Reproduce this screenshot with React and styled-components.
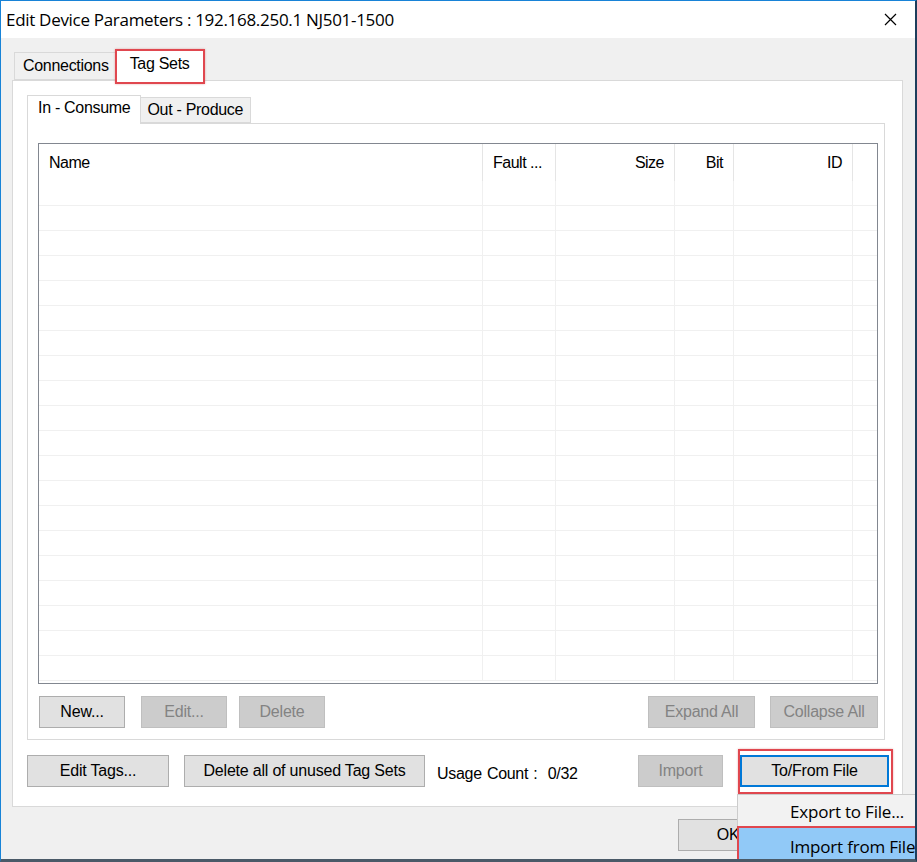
import React from "react";
import styled, { createGlobalStyle } from "styled-components";

const GlobalStyle = createGlobalStyle`
  html, body {
    margin: 0;
    padding: 0;
    overflow: hidden;
  }
  body {
    font-family: "Liberation Sans", Arial, sans-serif;
    color: #000;
  }
  * { box-sizing: border-box; }
`;

const COLS = "444px 73px 119px 59px 119px 1fr";

const Window = styled.div`
  position: relative;
  width: 917px;
  height: 862px;
  display: flex;
  flex-direction: column;
  border-top: 1px solid #1883d7;
  border-left: 1px solid #1883d7;
  border-right: 2px solid #1d3e5c;
  border-bottom: 3px solid #4a5a68;
  background: #f0f0f0;
  overflow: hidden;
`;

const TitleBar = styled.div`
  height: 37px;
  flex: none;
  background: #fff;
  display: flex;
  align-items: center;
  justify-content: space-between;
  padding: 0 18px 0 5px;
`;

const Title = styled.span`
  font-family: "Open Sans", "Liberation Sans", sans-serif;
  font-size: 17px;
  letter-spacing: -0.3px;
  color: #000;
`;

const Body = styled.div`
  flex: 1;
  display: flex;
  flex-direction: column;
  padding: 10px 12px 0 11px;
`;

const TabStrip = styled.div`
  display: flex;
  align-items: flex-end;
  height: ${(p) => p.$h}px;
  padding-left: ${(p) => p.$pad}px;
  position: relative;
  z-index: 1;
`;

const Tab = styled.div`
  position: relative;
  height: ${(p) => (p.$active ? p.$h + 3 : p.$h)}px;
  margin-bottom: ${(p) => (p.$active ? -1 : 0)}px;
  padding: 0 ${(p) => p.$px}px;
  display: flex;
  align-items: center;
  font-size: 16px;
  letter-spacing: -0.3px;
  background: ${(p) => (p.$active ? "#fff" : "#f0f0f0")};
  border: 1px solid #d9d9d9;
  border-bottom: ${(p) => (p.$active ? "none" : "1px solid #d9d9d9")};
  padding-bottom: ${(p) => (p.$active ? 4 : 0)}px;
  margin-left: ${(p) => (p.$active ? -2 : 0)}px;
  margin-right: ${(p) => (p.$active ? -2 : 0)}px;
  ${(p) => (p.$active ? "z-index: 2;" : "")}
  ${(p) =>
    p.$marked
      ? `&::after {
    content: "";
    position: absolute;
    inset: -2px -2px -3px -2px;
    border: 2px solid #e0474f;
    box-shadow: 0 0 2px rgba(200, 60, 60, 0.4);
  }`
      : ""}
`;

const Panel = styled.div`
  background: #fff;
  border: 1px solid #d9d9d9;
  display: flex;
  flex-direction: column;
  padding: ${(p) => p.$pad};
`;

const ListView = styled.div`
  height: 541px;
  border: 1px solid #828790;
  background: #fff;
  overflow: hidden;
`;

const HeaderRow = styled.div`
  display: grid;
  grid-template-columns: ${COLS};
  height: 37px;
`;

const HeaderCell = styled.div`
  display: flex;
  align-items: center;
  justify-content: ${(p) => (p.$right ? "flex-end" : "flex-start")};
  padding: 0 ${(p) => (p.$right ? 10 : 10)}px 0 ${(p) => (p.$right ? 0 : 10)}px;
  font-size: 16px;
  letter-spacing: -0.5px;
  border-right: 1px solid #e5e5e5;
  &:last-child { border-right: none; }
`;

const Row = styled.div`
  display: grid;
  grid-template-columns: ${COLS};
  height: 25px;
  border-bottom: 1px solid #f0f0f0;
`;

const Cell = styled.div`
  border-right: 1px solid #f0f0f0;
  &:last-child { border-right: none; }
`;

const ButtonRow = styled.div`
  display: flex;
  align-items: center;
  margin-top: ${(p) => p.$mt}px;
  margin-right: ${(p) => p.$mr || 0}px;
`;

const Button = styled.button`
  position: relative;
  height: 32px;
  width: ${(p) => p.$w}px;
  margin-left: ${(p) => p.$ml || 0}px;
  flex: none;
  font-family: "Liberation Sans", Arial, sans-serif;
  font-size: 16px;
  letter-spacing: -0.2px;
  padding: 0;
  color: ${(p) => (p.disabled ? "#838383" : "#000")};
  background: ${(p) => (p.disabled ? "#cccccc" : "#e1e1e1")};
  border: ${(p) =>
    p.$focus ? "2px solid #0078d7" : p.disabled ? "1px solid #bfbfbf" : "1px solid #adadad"};
  ${(p) =>
    p.$marked
      ? `&::after {
    content: "";
    position: absolute;
    inset: -8px -6px -9px -4px;
    border: 2px solid #e0474f;
    box-shadow: 0 0 2px rgba(200, 60, 60, 0.4);
  }`
      : ""}
`;

const Spacer = styled.div`
  flex: 1;
`;

const UsageText = styled.span`
  font-size: 16px;
  letter-spacing: -0.3px;
  margin-left: 12px;
  margin-top: 6px;
  word-spacing: 1px;
`;

const Footer = styled.div`
  display: flex;
  justify-content: flex-end;
  padding: 12px 27px 0 0;
  gap: 10px;
`;

const Menu = styled.div`
  position: absolute;
  left: 736px;
  top: 793px;
  width: 200px;
  height: 80px;
  background: #f2f2f2;
  border: 1px solid #cccccc;
  padding-top: 1px;
  font-family: "Open Sans", "Liberation Sans", sans-serif;
  font-size: 17px;
  letter-spacing: -0.2px;
  z-index: 5;
`;

const MenuItem = styled.div`
  position: relative;
  height: ${(p) => p.$h}px;
  display: flex;
  align-items: center;
  padding-left: 52px;
  white-space: nowrap;
  background: ${(p) => (p.$hot ? "#91c9f7" : "transparent")};
  ${(p) =>
    p.$marked
      ? `&::after {
    content: "";
    position: absolute;
    inset: -1px 0 -10px -1px;
    border: 2px solid #e0474f;
  }`
      : ""}
`;

const CloseIcon = () => (
  <svg width="13" height="13" viewBox="0 0 13 13">
    <path d="M1 1 L12 12 M12 1 L1 12" stroke="#000" strokeWidth="1.2" fill="none" />
  </svg>
);

const rows = Array.from({ length: 20 });

export default function App() {
  return (
    <>
      <GlobalStyle />
      <Window>
        <TitleBar>
          <Title>Edit Device Parameters : 192.168.250.1 NJ501-1500</Title>
          <CloseIcon />
        </TitleBar>
        <Body>
          <TabStrip $h={32} $pad={2}>
            <Tab $h={28} $px={8}>Connections</Tab>
            <Tab $h={28} $px={13} $active $marked>Tag Sets</Tab>
          </TabStrip>
          <Panel $pad="14px 17px 0 14px" style={{ height: 727 }}>
            <TabStrip $h={28} $pad={2}>
              <Tab $h={26} $px={10} $active>In - Consume</Tab>
              <Tab $h={26} $px={7}>Out - Produce</Tab>
            </TabStrip>
            <Panel $pad="19px 6px 11px 10px">
              <ListView>
                <HeaderRow>
                  <HeaderCell>Name</HeaderCell>
                  <HeaderCell>Fault ...</HeaderCell>
                  <HeaderCell $right>Size</HeaderCell>
                  <HeaderCell $right>Bit</HeaderCell>
                  <HeaderCell $right>ID</HeaderCell>
                  <HeaderCell />
                </HeaderRow>
                {rows.map((_, i) => (
                  <Row key={i}>
                    <Cell />
                    <Cell />
                    <Cell />
                    <Cell />
                    <Cell />
                    <Cell />
                  </Row>
                ))}
              </ListView>
              <ButtonRow $mt={12}>
                <Button $w={86} $ml={1}>New...</Button>
                <Button $w={86} $ml={16} disabled>Edit...</Button>
                <Button $w={86} $ml={12} disabled>Delete</Button>
                <Spacer />
                <Button $w={107} disabled>Expand All</Button>
                <Button $w={108} $ml={15} disabled>Collapse All</Button>
              </ButtonRow>
            </Panel>
            <ButtonRow $mt={15} $mr={-4}>
              <Button $w={142}>Edit Tags...</Button>
              <Button $w={241} $ml={15}>Delete all of unused Tag Sets</Button>
              <UsageText>Usage Count :&nbsp; 0/32</UsageText>
              <Spacer />
              <Button $w={85} disabled>Import</Button>
              <Button $w={149} $ml={17} $focus $marked>To/From File</Button>
            </ButtonRow>
          </Panel>
          <Footer>
            <Button $w={100}>OK</Button>
            <Button $w={88}>Cancel</Button>
          </Footer>
        </Body>
        <Menu>
          <MenuItem $h={31}>Export to File...</MenuItem>
          <MenuItem $h={38} $hot $marked>Import from File</MenuItem>
        </Menu>
      </Window>
    </>
  );
}
